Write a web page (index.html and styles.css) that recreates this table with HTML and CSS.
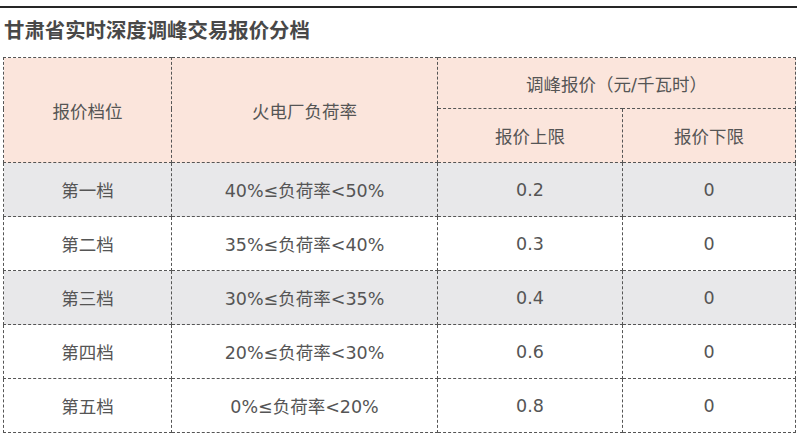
FILE: index.html
```html
<!DOCTYPE html>
<html lang="zh-CN">
<head>
<meta charset="utf-8">
<link rel="stylesheet" href="styles.css">
</head>
<body>
<div class="rule"></div>
<h1 class="title">甘肃省实时深度调峰交易报价分档</h1>
<table class="grid">
  <colgroup>
    <col class="c1"><col class="c2"><col class="c3"><col class="c4">
  </colgroup>
  <thead>
    <tr class="h1">
      <th rowspan="2">报价档位</th>
      <th rowspan="2">火电厂负荷率</th>
      <th colspan="2">调峰报价（元/千瓦时）</th>
    </tr>
    <tr class="h2">
      <th>报价上限</th>
      <th>报价下限</th>
    </tr>
  </thead>
  <tbody>
    <tr class="grey"><td>第一档</td><td>40%≤负荷率&lt;50%</td><td>0.2</td><td>0</td></tr>
    <tr><td>第二档</td><td>35%≤负荷率&lt;40%</td><td>0.3</td><td>0</td></tr>
    <tr class="grey"><td>第三档</td><td>30%≤负荷率&lt;35%</td><td>0.4</td><td>0</td></tr>
    <tr><td>第四档</td><td>20%≤负荷率&lt;30%</td><td>0.6</td><td>0</td></tr>
    <tr><td>第五档</td><td>0%≤负荷率&lt;20%</td><td>0.8</td><td>0</td></tr>
  </tbody>
</table>
</body>
</html>
```
FILE: styles.css
```css
html, body {
  margin: 0;
  padding: 0;
  background: #ffffff;
}
body {
  font-family: "DejaVu Sans", "Noto Sans CJK SC", sans-serif;
  color: #555555;
}
.rule {
  margin-top: 6px;
  width: 797px;
  height: 2px;
  background: #262626;
}
.title {
  margin: 9px 0 0 4px;
  font-size: 20.4px;
  line-height: 24px;
  font-weight: bold;
  color: #484848;
  font-family: "Noto Sans CJK SC", sans-serif;
}
.grid {
  margin: 16px 0 0 3px;
  width: 792px;
  border-collapse: collapse;
  table-layout: fixed;
  font-size: 17.5px;
}
.c1 { width: 168px; }
.c2 { width: 266px; }
.c3 { width: 185px; }
.c4 { width: 173px; }
.grid th, .grid td {
  border: 1px dashed #555555;
  text-align: center;
  vertical-align: middle;
  padding: 0;
  font-weight: normal;
}
.grid thead th {
  background: #fbe5dc;
}
.h1 { height: 51px; }
.h2 { height: 54px; }
.grid tbody tr { height: 54px; }
.grid tbody tr.grey td { background: #e8e8ea; }
```
